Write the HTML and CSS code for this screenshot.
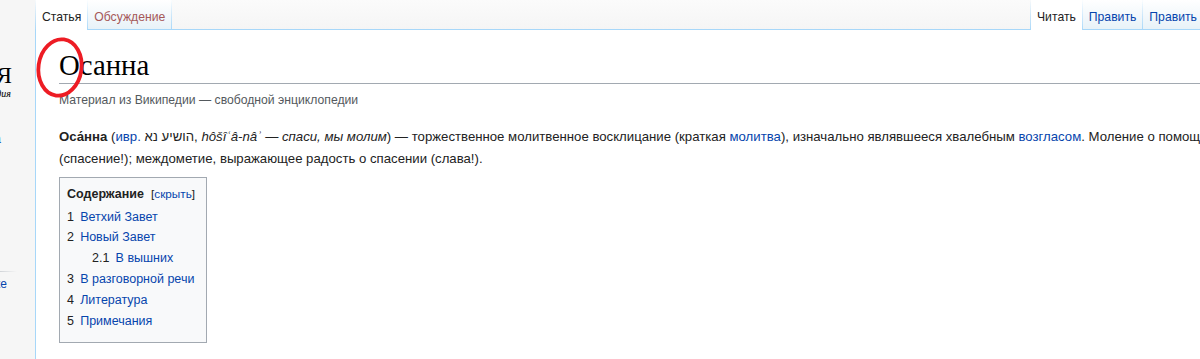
FILE: index.html
```html
<!DOCTYPE html>
<html lang="ru">
<head>
<meta charset="utf-8">
<title>Осанна — Википедия</title>
<link rel="stylesheet" href="styles.css">
</head>
<body>
<div class="layout">
  <aside class="sidebar">
    <div class="wordmark">ВикипедиЯ</div>
    <div class="tagline">Свободная энциклопедия</div>
    <a class="side-link s1" href="#">Заглавная страница</a>
    <div class="side-sep"></div>
    <a class="side-link s2" href="#">Сообщить об ошибке</a>
  </aside>
  <div class="main">
    <header class="head">
      <nav class="tabs left">
        <a class="tab selected" href="#">Статья</a>
        <a class="tab new" href="#">Обсуждение</a>
      </nav>
      <nav class="tabs right">
        <a class="tab selected" href="#">Читать</a>
        <a class="tab" href="#">Править</a>
        <a class="tab" href="#">Править исходный код</a>
        <a class="tab" href="#">История</a>
      </nav>
    </header>
    <main class="content">
      <svg class="annot" viewBox="0 0 48 61" aria-hidden="true"><ellipse cx="24" cy="30.5" rx="21.5" ry="28.3" fill="none" stroke="#ed1c24" stroke-width="3.8" transform="rotate(8 24 30.5)"/></svg>
      <h1 class="title">Осанна</h1>
      <div class="sitesub">Материал из Википедии — свободной энциклопедии</div>
      <p class="body-text"><b>Оса́нна</b> (<a href="#">ивр.</a> <span lang="he" dir="rtl">הושיע נא</span>, <i>hôšîʿâ-nâʾ — спаси, мы молим</i>) — торжественное молитвенное восклицание (краткая <a href="#">молитва</a>), изначально являвшееся хвалебным <a href="#">возгласом</a>. Моление о помощи (спасение!); междометие, выражающее радость о спасении (слава!).</p>
      <div class="toc">
        <div class="toc-title"><h2>Содержание</h2><span class="toc-toggle">[<a href="#">скрыть</a>]</span></div>
        <ul>
          <li><span class="num">1</span><a href="#">Ветхий Завет</a></li>
          <li><span class="num">2</span><a href="#">Новый Завет</a>
            <ul>
              <li><span class="num">2.1</span><a href="#">В вышних</a></li>
            </ul>
          </li>
          <li><span class="num">3</span><a href="#">В разговорной речи</a></li>
          <li><span class="num">4</span><a href="#">Литература</a></li>
          <li><span class="num">5</span><a href="#">Примечания</a></li>
        </ul>
      </div>
    </main>
  </div>
</div>
</body>
</html>
```
FILE: styles.css
```css
* { box-sizing: border-box; }

body {
  margin: 0;
  background: #f6f6f6;
  font-family: "Liberation Sans", Arial, sans-serif;
  color: #222222;
  overflow: hidden;
}

a { color: #0645ad; text-decoration: none; }

.layout {
  display: flex;
  width: 1264px;
  height: 359px;
}

/* sidebar (mostly scrolled out of view) */
.sidebar {
  flex: 0 0 35px;
  overflow: hidden;
  display: flex;
  flex-direction: column;
  align-items: flex-end;
}
.sidebar > * { flex: none; white-space: nowrap; }

.wordmark {
  font-family: "Liberation Serif", serif;
  font-size: 24px;
  line-height: 24px;
  margin: 63px 23px 0 0;
  color: #000;
}
.tagline {
  font-family: "Liberation Serif", serif;
  font-style: italic;
  font-size: 10px;
  line-height: 12px;
  margin: 1px 24px 0 0;
  color: #000;
}
.side-link {
  display: block;
  font-size: 12px;
  line-height: 16px;
}
.side-link.s1 { margin: 31px 34px 0 0; }
.side-link.s2 { margin: 4px 28px 0 0; }
.side-sep {
  width: 140px;
  height: 1px;
  margin: 124px 18px 0 0;
  background: linear-gradient(to right, #c8ccd1 0, #c8ccd1 85%, rgba(200, 204, 209, 0) 100%);
}

/* main column */
.main {
  flex: 1;
  min-width: 0;
  display: flex;
  flex-direction: column;
}

.head {
  flex: 0 0 30px;
  display: flex;
  background: linear-gradient(to top, #a7d7f9 0, #a7d7f9 1px, #f5f5f5 1px, #fbfbfb 100%);
}

.tabs {
  display: flex;
  border-left: 1px solid;
  border-image: linear-gradient(rgba(167, 215, 249, 0), #a7d7f9) 1;
}
.tabs.left { flex: 0 0 995px; }
.tabs.right { flex: none; }

.tab {
  display: block;
  padding: 9.5px 6px 0;
  font-size: 12.2px;
  line-height: 14px;
  white-space: nowrap;
  border-right: 1px solid;
  border-image: linear-gradient(rgba(167, 215, 249, 0), #a7d7f9) 1;
  background: linear-gradient(to top, #a7d7f9 0, #a7d7f9 1px, #e8f2f8 1px, #ffffff 100%);
}
.tab.selected { background: #fff; color: #222222; }
.tab.new { color: #a55858; }

.content {
  flex: 1;
  position: relative;
  background: #fff;
  border-left: 1px solid #a7d7f9;
  padding: 18px 24px 0 23px;
}

.annot {
  position: absolute;
  left: 0;
  top: 7px;
  width: 48px;
  height: 61px;
  overflow: visible;
}

.title {
  font-family: "Liberation Serif", Georgia, serif;
  font-weight: normal;
  font-size: 28.8px;
  line-height: 35px;
  margin: 0 0 6px;
  color: #000;
  border-bottom: 1px solid #a2a9b1;
}

.sitesub {
  font-size: 12.2px;
  line-height: 20.8px;
  color: #54595d;
}

.body-text {
  font-size: 13.2px;
  line-height: 22.4px;
  margin: 15px 0 6px;
}

.toc {
  display: inline-block;
  border: 1px solid #a2a9b1;
  background: #f8f9fa;
  padding: 7px 11px 7px 7px;
  font-size: 12.5px;
}
.toc-title { line-height: 17px; }
.toc-title h2 {
  display: inline;
  font-size: 12.5px;
  font-weight: bold;
  margin: 0;
}
.toc-toggle {
  font-size: 94%;
  margin-left: 7px;
}
.toc ul {
  list-style: none;
  margin: 4px 0;
  padding: 0;
  line-height: 20.8px;
}
.toc ul ul { margin: 0 0 0 25px; }
.toc .num { padding-right: 6.2px; color: #222222; }
```
